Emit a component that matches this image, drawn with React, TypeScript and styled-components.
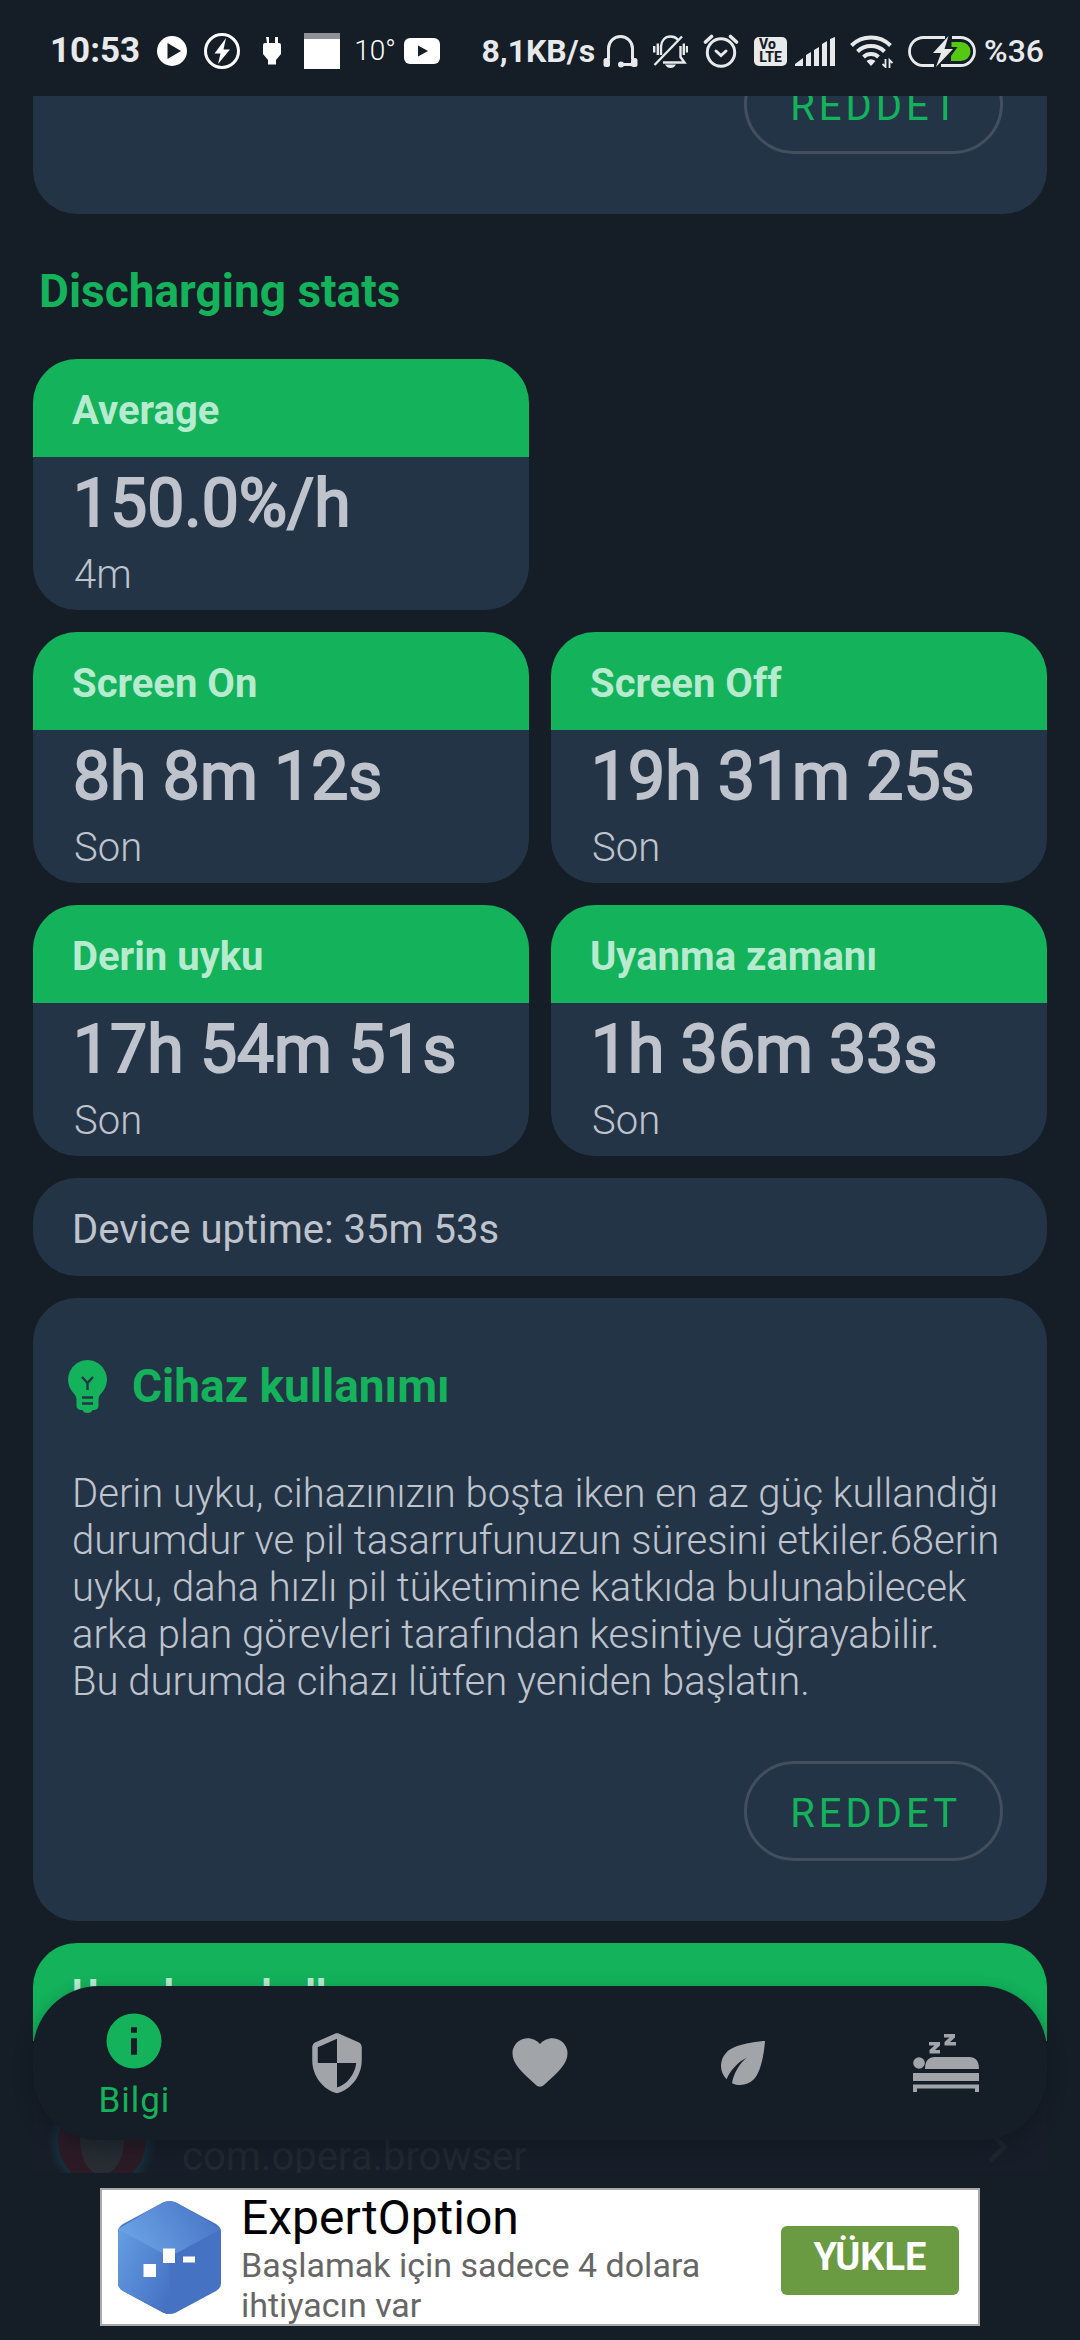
import React from "react";
import styled, { createGlobalStyle, css } from "styled-components";

const color = {
  page: "#151d26",
  card: "#243447",
  green: "#13b25b",
  text: "#bfc3cc",
  onGreen: "#b7ebcf",
  outline: "#434f5f",
  status: "#e7e9eb",
  idle: "#a1a5a9",
};

const GlobalStyle = createGlobalStyle`
  *, *::before, *::after { box-sizing: border-box; }
  html, body, #root { height: 100%; }
  body {
    margin: 0;
    background: ${color.page};
    color: ${color.text};
    font-family: Roboto, "Noto Sans", sans-serif;
  }
  h2, h3, p { margin: 0; }
  button { font: inherit; cursor: pointer; }
`;

const Screen = styled.div`
  height: 100vh;
  display: flex;
  flex-direction: column;
  background: ${color.page};
  overflow: hidden;
`;

/* ---------- status bar ---------- */

const StatusBar = styled.header`
  flex: none;
  height: 96px;
  padding: 6px 36px 0 50px;
  display: flex;
  align-items: center;
  justify-content: space-between;
  color: ${color.status};
`;

const StatusGroup = styled.div<{ $gap: number }>`
  display: flex;
  align-items: center;
  gap: ${(p) => p.$gap}px;
`;

const StatusText = styled.span<{ $weight: number; $size: number }>`
  font-size: ${(p) => p.$size}px;
  line-height: 40px;
  font-weight: ${(p) => p.$weight};
`;

const Temperature = styled.span`
  width: 36px;
  text-align: center;
  font-size: 28px;
  line-height: 40px;
  font-weight: 300;
  color: #fff;
`;

const Glyph = styled.svg`
  flex: none;
  display: block;
`;

/* ---------- scrolling content ---------- */

const Viewport = styled.div`
  flex: 1;
  min-height: 0;
  position: relative;
  overflow: hidden;
`;

const Content = styled.main`
  padding: 0 33px;
  display: flex;
  flex-direction: column;
  gap: 22px;
`;

const Panel = styled.section<{ $scrolled?: boolean }>`
  padding: 60px 39px;
  border-radius: 44px;
  background: ${color.card};
  ${(p) =>
    p.$scrolled &&
    css`
      margin-top: -102px;
    `}
`;

const SectionTitle = styled.h2`
  padding: 30px 6px 21px;
  font-size: 46px;
  line-height: 50px;
  font-weight: 700;
  color: ${color.green};
`;

const Actions = styled.div`
  display: flex;
  justify-content: flex-end;
  padding-right: 5px;
`;

const OutlineButton = styled.button`
  height: 100px;
  padding: 5px 39px 0 43px;
  border: 3px solid ${color.outline};
  border-radius: 50px;
  background: none;
  color: ${color.green};
  font-size: 40px;
  line-height: 48px;
  letter-spacing: 4px;
`;

const StatGrid = styled.div`
  display: grid;
  grid-template-columns: 1fr 1fr;
  gap: 22px;
`;

const StatCard = styled.article`
  border-radius: 44px;
  background: ${color.card};
  overflow: hidden;

  /* the average keeps its row to itself */
  &:first-child + & {
    grid-column-start: 1;
  }
`;

const CardHeader = styled.h3`
  padding: 29px 39px 23px;
  background: ${color.green};
  color: ${color.onGreen};
  font-size: 40px;
  line-height: 46px;
  font-weight: 700;
`;

const StatBody = styled.div`
  padding: 6px 40px 12px;
`;

const StatValue = styled.p`
  font-size: 66px;
  line-height: 82px;
  -webkit-text-stroke: 2px currentColor;
`;

const StatNote = styled.p`
  padding: 7px 1px 0;
  font-size: 40px;
  line-height: 46px;
  font-weight: 300;
`;

const Uptime = styled.p`
  padding: 29px 39px 23px;
  border-radius: 44px;
  background: ${color.card};
  font-size: 40px;
  line-height: 46px;
`;

const TipTitle = styled.h2`
  display: flex;
  align-items: center;
  gap: 25px;
  margin-left: -4px;
  font-size: 46px;
  line-height: 56px;
  font-weight: 700;
  color: ${color.green};
`;

const TipText = styled.p`
  padding: 56px 0;
  font-size: 40px;
  line-height: 47px;
  font-weight: 300;
  white-space: pre-line;
`;

const UsageCard = styled.section`
  border-radius: 44px 44px 0 0;
  overflow: hidden;
`;

const AppRow = styled.div`
  display: flex;
  align-items: center;
  gap: 26px;
  padding: 46px 39px 40px 15px;
  background: #171e29;
`;

const AppName = styled.span`
  flex: 1;
  padding-top: 32px;
  font-size: 40px;
  line-height: 46px;
  color: #222931;
`;

/* ---------- bottom navigation ---------- */

const NavBar = styled.nav`
  position: absolute;
  left: 33px;
  right: 33px;
  bottom: 33px;
  height: 154px;
  display: flex;
  border-radius: 66px;
  background: ${color.page};
  box-shadow: 0 8px 18px rgba(12, 18, 26, 0.45);
`;

const Tab = styled.button<{ $active?: boolean }>`
  flex: 1;
  display: flex;
  flex-direction: column;
  align-items: center;
  justify-content: center;
  padding: ${(p) => (p.$active ? 5 : 0)}px 0 0;
  border: 0;
  background: none;
  color: ${(p) => (p.$active ? color.green : color.idle)};
`;

const TabLabel = styled.span`
  padding-top: 5px;
  font-size: 35px;
  line-height: 44px;
  letter-spacing: 1px;
`;

/* ---------- advertisement ---------- */

const AdSlot = styled.footer`
  flex: none;
  padding: 15px 100px 14px;
`;

const Ad = styled.div`
  height: 138px;
  padding: 0 19px 0 16px;
  display: flex;
  align-items: center;
  border: 2px solid #a9a9a9;
  background: #fff;
`;

const AdCopy = styled.div`
  flex: 1;
  align-self: flex-start;
  padding: 1px 60px 0 20px;
`;

const AdTitle = styled.p`
  font-size: 48px;
  line-height: 54px;
  color: #000;
`;

const AdText = styled.p`
  font-size: 34px;
  line-height: 40px;
  color: #666;
`;

const InstallButton = styled.button`
  width: 178px;
  height: 69px;
  margin-top: 6px;
  padding: 0 0 6px;
  border: 0;
  border-radius: 6px;
  background: #6a9a41;
  color: #fff;
  font-size: 38px;
  line-height: 46px;
  font-weight: 700;
`;

/* ---------- drawings ---------- */

const StatusGlyph = ({ children }: { children: React.ReactNode }) => (
  <Glyph width="36" height="36" viewBox="0 0 36 36" aria-hidden>
    {children}
  </Glyph>
);

const PlayCircle = () => (
  <StatusGlyph>
    <circle cx="18" cy="18" r="15" fill="#fff" />
    <path d="M13.500 10v16l13.500-8z" fill={color.page} />
  </StatusGlyph>
);

const BoltCircle = () => (
  <StatusGlyph>
    <circle cx="18" cy="18" r="16.500" fill="none" stroke="#fff" strokeWidth="3" />
    <path d="M22 5 10.500 20.500h6L14 31l12-14.500h-6.500z" fill="#fff" />
  </StatusGlyph>
);

const Plug = () => (
  <StatusGlyph>
    <path d="M12 4h3v6h6V4h3v6h1q2 0 2 2v9l-5 6v4.500h-8V27l-5-6v-9q0-2 2-2h2z" fill="#fff" />
  </StatusGlyph>
);

const Square = () => (
  <StatusGlyph>
    <rect width="36" height="36" fill="#fff" />
    <rect width="36" height="6" fill="#8f9196" />
  </StatusGlyph>
);

const Video = () => (
  <StatusGlyph>
    <rect y="5" width="36" height="26" rx="6" fill="#fff" />
    <path d="M14 12.500v11l10-5.500z" fill={color.page} />
  </StatusGlyph>
);

const Headset = () => (
  <Glyph width="35" height="33" viewBox="0 0 35 33" fill="none" stroke="currentColor" aria-hidden>
    <path d="M5.500 24V13.500a12 12 0 0 1 24 0V24M30 29.500H18" strokeWidth="3" />
    <rect x="0.500" y="23" width="6.500" height="9" rx="2.500" fill="currentColor" stroke="none" />
    <rect x="28" y="23" width="6.500" height="9" rx="2.500" fill="currentColor" stroke="none" />
    <circle cx="18" cy="29.500" r="3" fill="currentColor" stroke="none" />
  </Glyph>
);

const BellOff = () => (
  <Glyph width="35" height="33" viewBox="0 0 35 33" fill="none" stroke="currentColor" strokeWidth="2.400" aria-hidden>
    <path d="M8 20v-8.500C8.500 5.500 12 1.500 17.500 1.500c3.500 0 5.500 1 7.200 3M27.500 11v11l4 5.500H10M29 1.500 1.500 30M4.800 8.500V20M1.200 11v6.500M30.800 8.500V20M34 11v6.500" />
    <path d="M12 29.500h11q-2 3.500-5.500 3.500T12 29.500z" fill="currentColor" stroke="none" />
  </Glyph>
);

const Alarm = () => (
  <Glyph width="36" height="34" viewBox="0 0 36 34" fill="none" stroke="currentColor" strokeLinecap="round" aria-hidden>
    <circle cx="18" cy="18.500" r="13.700" strokeWidth="3" />
    <path d="m13 17 5 4.500 5-4.500" strokeWidth="3" />
    <path d="M2.500 8 8.500 2.500M33.500 8l-6-5.500" strokeWidth="3.600" />
  </Glyph>
);

const VolteBadge = styled.span`
  width: 33px;
  height: 29px;
  border-radius: 5px;
  background: ${color.status};
  color: ${color.page};
  display: flex;
  flex-direction: column;
  align-items: center;
  justify-content: center;
  font-size: 14px;
  line-height: 13px;
  font-weight: 800;
`;

const VolteTop = styled.span`
  align-self: flex-start;
  padding-left: 5px;
`;

const Signal = () => (
  <Glyph width="40" height="29" viewBox="0 0 40 29" fill="currentColor" aria-hidden>
    <path d="M0 29v-2l8-6v8zM11 18l5-3v14h-5zM19 13l5-3v19h-5zM27 7l5-3v25h-5zM35 2l5-2v29h-5z" />
  </Glyph>
);

const Wifi = () => (
  <Glyph width="43" height="33" viewBox="0 0 43 33" fill="none" stroke="currentColor" aria-hidden>
    <path d="M1.500 10.500a28 28 0 0 1 39 0M7.500 16.500a19.500 19.500 0 0 1 27 0M13.500 22a11 11 0 0 1 15 0" strokeWidth="4" />
    <path d="M16.500 26q4.500-3.500 9 0L21 31z" fill="currentColor" stroke="none" />
    <path d="M35.500 24v8l-3-3M39.500 33v-8l3 3" strokeWidth="1.800" />
  </Glyph>
);

const Battery = () => (
  <Glyph width="68" height="31" viewBox="0 0 68 31" aria-hidden>
    <path d="M37 1.500H15.500a14 14 0 0 0 0 28H26M44 1.500h8.500a14 14 0 0 1 0 28H33" fill="none" stroke="currentColor" strokeWidth="2.800" />
    <path d="M43.500 6H53a9 9 0 0 1 0 19H43v-5l6.500-9h-6z" fill="#55c814" />
    <path d="M40.500 0 25 17h8l-5 14 17-18h-8.500z" fill="currentColor" />
  </Glyph>
);

const Bulb = () => (
  <Glyph width="39" height="53" viewBox="0 0 39 53" aria-hidden>
    <path d="M19.500 0a19.500 19.500 0 0 1 14 33q-3 3-3 6v7q0 3-4 4h-2q-1 3-5 3t-5-3h-2q-4-1-4-4v-7q0-3-3-6a19.500 19.500 0 0 1 14-33z" fill={color.green} />
    <path d="M14 17l5.500 6 5.500-6M19.500 22v8M14 37.500h11M14 43.500h11" fill="none" stroke={color.card} strokeWidth="2.400" />
  </Glyph>
);

const Info = () => (
  <Glyph width="66" height="66" viewBox="0 0 24 24" fill="currentColor" aria-hidden>
    <path d="M12 2a10 10 0 1 0 0 20 10 10 0 0 0 0-20zm1.100 15h-2.200v-6h2.200zm0-8h-2.200V7h2.200z" />
  </Glyph>
);

const Shield = () => (
  <Glyph width="66" height="66" viewBox="0 0 24 24" fill="currentColor" aria-hidden>
    <path d="M11.190 1.360l-7 3.110C3.470 4.790 3 5.510 3 6.300V11c0 5.550 3.840 10.740 9 12 5.160-1.260 9-6.450 9-12V6.300c0-.79-.47-1.510-1.190-1.830l-7-3.110c-.51-.23-1.110-.23-1.620 0zM12 11.990h7c-.53 4.120-3.280 7.790-7 8.940V12H5V6.300l7-3.110v8.800z" />
  </Glyph>
);

const Heart = () => (
  <Glyph width="66" height="66" viewBox="0 0 24 24" fill="currentColor" aria-hidden>
    <path d="M13.350 20.130c-.76.69-1.930.69-2.690-.01l-.11-.1C5.300 15.270 1.870 12.160 2 8.280c.06-1.700.93-3.330 2.340-4.290 2.640-1.800 5.900-.96 7.660 1.100 1.760-2.060 5.020-2.910 7.660-1.100 1.410.96 2.280 2.590 2.340 4.290.14 3.880-3.300 6.990-8.550 11.760l-.1.090z" />
  </Glyph>
);

const Leaf = () => (
  <Glyph width="66" height="66" viewBox="0 0 24 24" fill="currentColor" aria-hidden>
    <path d="M6.050 8.050c-2.730 2.730-2.730 7.150-.02 9.880 1.470-3.400 4.090-6.240 7.360-7.930-2.770 2.340-4.710 5.610-5.390 9.320 2.600 1.230 5.800.78 7.950-1.370C19.430 14.470 20 4 20 4S9.530 4.570 6.050 8.050z" />
  </Glyph>
);

const Bed = () => (
  <Glyph width="66" height="66" viewBox="0 0 66 66" fill="currentColor" aria-hidden>
    <circle cx="6" cy="33" r="5.800" />
    <path d="M12 39q0-12 10-12h34q10 0 10 12zM0 43h66v8H0zM0 54.500h66V62h-4v-3.500H4V62H0z" />
    <path d="M16 12h11v3.500l-5 4.500h5v3.500H16.500V20l5-4.500H16zM31 4h11v3.500L37 12h6v3.500H31.500V12l5-4.500H31z" />
  </Glyph>
);

const BrowserLogo = () => (
  <Glyph width="108" height="108" viewBox="0 0 108 108" aria-hidden>
    <defs>
      <radialGradient id="halo">
        <stop offset="0.800" stopColor="#15303f" />
        <stop offset="1" stopColor="#171e29" />
      </radialGradient>
    </defs>
    <circle cx="54" cy="54" r="54" fill="url(#halo)" />
    <circle cx="54" cy="54" r="44" fill="#2c1b25" />
    <ellipse cx="54" cy="54" rx="22" ry="34" fill="#272d33" />
  </Glyph>
);

const Chevron = () => (
  <Glyph width="22" height="44" viewBox="0 0 22 44" fill="none" stroke="#20262f" strokeWidth="5" aria-hidden>
    <path d="M4 12l14 16L4 42" />
  </Glyph>
);

const AdLogo = () => (
  <Glyph width="103" height="113" viewBox="0 0 103 113" aria-hidden>
    <defs>
      <linearGradient id="hexTop" x1="0" y1="0.600" x2="1" y2="0.200">
        <stop offset="0" stopColor="#6ba4e6" />
        <stop offset="1" stopColor="#4672c4" />
      </linearGradient>
      <linearGradient id="hexLeft" x1="0" y1="0" x2="1" y2="0.800">
        <stop offset="0" stopColor="#659fe3" />
        <stop offset="1" stopColor="#4672c4" />
      </linearGradient>
      <clipPath id="hex">
        <path d="M45 1.500q6.500-3 13 0L98 23q5 3 5 8v51q0 5-5 8l-40 21.500q-6.500 3-13 0L5 90q-5-3-5-8V31q0-5 5-8z" />
      </clipPath>
    </defs>
    <g clipPath="url(#hex)">
      <rect width="103" height="113" fill="#4672c4" />
      <path d="M0 26 51.500 56V113H0z" fill="url(#hexLeft)" />
      <path d="M0 28 51.500-3 103 28 51.500 56z" fill="url(#hexTop)" />
    </g>
    <path d="M45 47.500h12V62H45zM25.500 63H38v13H25.500zM65 55.500h12v6H65z" fill="#fff" />
  </Glyph>
);

/* ---------- page ---------- */

const stats = [
  { title: "Average", value: "150.0%/h", note: "4m" },
  { title: "Screen On", value: "8h 8m 12s", note: "Son" },
  { title: "Screen Off", value: "19h 31m 25s", note: "Son" },
  { title: "Derin uyku", value: "17h 54m 51s", note: "Son" },
  { title: "Uyanma zamanı", value: "1h 36m 33s", note: "Son" },
];

const tabs = [
  { name: "Pil koruması", Icon: Shield },
  { name: "Sağlık", Icon: Heart },
  { name: "Tasarruf", Icon: Leaf },
  { name: "Uyku", Icon: Bed },
];

const tip =
  "Derin uyku, cihazınızın boşta iken en az güç kullandığı durumdur ve pil tasarrufunuzun süresini etkiler.68erin uyku, daha hızlı pil tüketimine katkıda bulunabilecek arka plan görevleri tarafından kesintiye uğrayabilir.\nBu durumda cihazı lütfen yeniden başlatın.";

export default function App() {
  return (
    <Screen>
      <GlobalStyle />
      <StatusBar>
        <StatusGroup $gap={14}>
          <StatusText $weight={700} $size={35}>10:53</StatusText>
          <PlayCircle />
          <BoltCircle />
          <Plug />
          <Square />
          <Temperature>10°</Temperature>
          <Video />
        </StatusGroup>
        <StatusGroup $gap={15}>
          <StatusGroup $gap={8}>
            <StatusText $weight={700} $size={32}>8,1KB/s</StatusText>
            <Headset />
          </StatusGroup>
          <BellOff />
          <Alarm />
          <StatusGroup $gap={8}>
            <VolteBadge>
              <VolteTop>Vo</VolteTop>
              <span>LTE</span>
            </VolteBadge>
            <Signal />
          </StatusGroup>
          <Wifi />
          <StatusGroup $gap={8}>
            <Battery />
            <StatusText $weight={500} $size={32}>%36</StatusText>
          </StatusGroup>
        </StatusGroup>
      </StatusBar>

      <Viewport>
        <Content>
          <Panel $scrolled>
            <Actions>
              <OutlineButton type="button">REDDET</OutlineButton>
            </Actions>
          </Panel>
          <SectionTitle>Discharging stats</SectionTitle>
          <StatGrid>
            {stats.map((s) => (
              <StatCard key={s.title}>
                <CardHeader>{s.title}</CardHeader>
                <StatBody>
                  <StatValue>{s.value}</StatValue>
                  <StatNote>{s.note}</StatNote>
                </StatBody>
              </StatCard>
            ))}
          </StatGrid>
          <Uptime>Device uptime: 35m 53s</Uptime>
          <Panel>
            <TipTitle>
              <Bulb />
              Cihaz kullanımı
            </TipTitle>
            <TipText>{tip}</TipText>
            <Actions>
              <OutlineButton type="button">REDDET</OutlineButton>
            </Actions>
          </Panel>
          <UsageCard>
            <CardHeader>Uygulama kullanımı</CardHeader>
            <AppRow>
              <BrowserLogo />
              <AppName>com.opera.browser</AppName>
              <Chevron />
            </AppRow>
          </UsageCard>
        </Content>
        <NavBar>
          <Tab type="button" $active>
            <Info />
            <TabLabel>Bilgi</TabLabel>
          </Tab>
          {tabs.map(({ name, Icon }) => (
            <Tab key={name} type="button" aria-label={name}>
              <Icon />
            </Tab>
          ))}
        </NavBar>
      </Viewport>

      <AdSlot>
        <Ad>
          <AdLogo />
          <AdCopy>
            <AdTitle>ExpertOption</AdTitle>
            <AdText>Başlamak için sadece 4 dolara ihtiyacın var</AdText>
          </AdCopy>
          <InstallButton type="button">YÜKLE</InstallButton>
        </Ad>
      </AdSlot>
    </Screen>
  );
}
